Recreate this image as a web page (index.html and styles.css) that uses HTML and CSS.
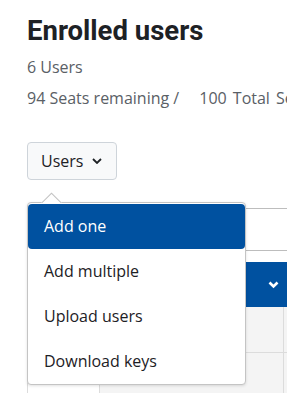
FILE: index.html
```html
<!DOCTYPE html>
<html lang="en">
<head>
    <meta charset="UTF-8">
    <meta name="viewport" content="width=device-width, initial-scale=1.0">
    <title>Enrolled users</title>
    <link rel="stylesheet" href="styles.css">
</head>
<body>
    <main class="page">
        <h2 class="title">Enrolled users</h2>
        <p class="stat">6 Users</p>
        <p class="stat">94 Seats remaining /<span class="total">100 Total Seats</span></p>

        <div class="actions">
            <button class="users-btn">Users
                <svg class="chev" width="10" height="6" viewBox="0 0 10 6"><path d="M1 1l4 4 4-4" fill="none" stroke="#1d2125" stroke-width="1.8"/></svg>
            </button>
            <div class="menu">
                <span class="menu-caret"></span>
                <a class="menu-item active">Add one</a>
                <a class="menu-item">Add multiple</a>
                <a class="menu-item">Upload users</a>
                <a class="menu-item">Download keys</a>
            </div>
        </div>

        <div class="filter-bar"></div>

        <div class="table">
            <div class="thead">
                <svg class="thead-chev" width="11" height="8" viewBox="0 0 11 8"><path d="M1.5 1.5l4 4 4-4" fill="none" stroke="#fff" stroke-width="2.6"/></svg>
            </div>
            <div class="row">
                <div class="cell first"></div>
                <div class="cell second"></div>
                <div class="cell"></div>
            </div>
            <div class="row">
                <div class="cell first"></div>
                <div class="cell second"></div>
                <div class="cell"></div>
            </div>
        </div>
    </main>
</body>
</html>
```

FILE: styles.css
```css
*{
    margin: 0;
    padding: 0;
    box-sizing: border-box;
}
body{
    background-color: #fff;
    font-family: "Open Sans", "Noto Sans", sans-serif;
    font-size: 16px;
    color: #1d2125;
    overflow: hidden;
}
.page{
    padding: 14px 0 0 27px;
    width: 600px;
}
.title{
    font-family: Roboto, sans-serif;
    font-weight: 700;
    font-size: 27.5px;
    line-height: 1.2;
    color: #1d2125;
    margin-bottom: 8px;
}
.stat{
    line-height: 24px;
    color: #5a6066;
    white-space: nowrap;
    margin-bottom: 7px;
}
.total{
    margin-left: 20px;
    word-spacing: 2px;
}
.actions{
    position: relative;
    margin-top: 32px;
}
.users-btn{
    display: inline-flex;
    align-items: center;
    gap: 9px;
    height: 38px;
    padding: 0 14px 0 13px;
    font-family: inherit;
    font-size: 16px;
    color: #1d2125;
    background-color: #f8f9fa;
    border: 1px solid #ced4da;
    border-radius: 4px;
}
.menu{
    position: absolute;
    top: 60px;
    left: 0;
    width: 219px;
    padding-top: 1px;
    background-color: #fff;
    border: 1px solid #c4c4c4;
    border-radius: 4px;
    box-shadow: 0 1px 3px rgba(0,0,0,0.12);
    z-index: 2;
}
.menu-caret{
    position: absolute;
    top: -12px;
    left: 11px;
    width: 24px;
    height: 12px;
    overflow: hidden;
}
.menu-caret::after{
    content: "";
    position: absolute;
    left: 4px;
    top: 5px;
    width: 15px;
    height: 15px;
    background-color: #fff;
    border: 1px solid #c4c4c4;
    transform: rotate(45deg);
}
.menu-item{
    display: block;
    height: 45px;
    line-height: 45px;
    padding-left: 16px;
    color: #1d2125;
}
.menu-item.active{
    background-color: #0051a0;
    color: #fff;
    border-radius: 4px;
}
.filter-bar{
    margin-top: 28px;
    height: 43px;
    border-top: 1px solid #bdbdbd;
    border-bottom: 1px solid #bdbdbd;
}
.table{
    margin-top: 11px;
    border-left: 1px solid #dcdcdc;
}
.thead{
    height: 45px;
    background-color: #0051a0;
    display: flex;
    align-items: center;
    padding-left: 240px;
}
.row{
    display: flex;
    height: 46px;
    border-bottom: 1px solid #dcdcdc;
}
.cell{
    flex: 1;
    background-color: #f4f4f4;
}
.cell.first{
    flex: 0 0 72px;
    background-color: #fff;
    border-right: 1px solid #dcdcdc;
}
.cell.second{
    flex: 0 0 184px;
    border-right: 1px solid #dcdcdc;
}
```
